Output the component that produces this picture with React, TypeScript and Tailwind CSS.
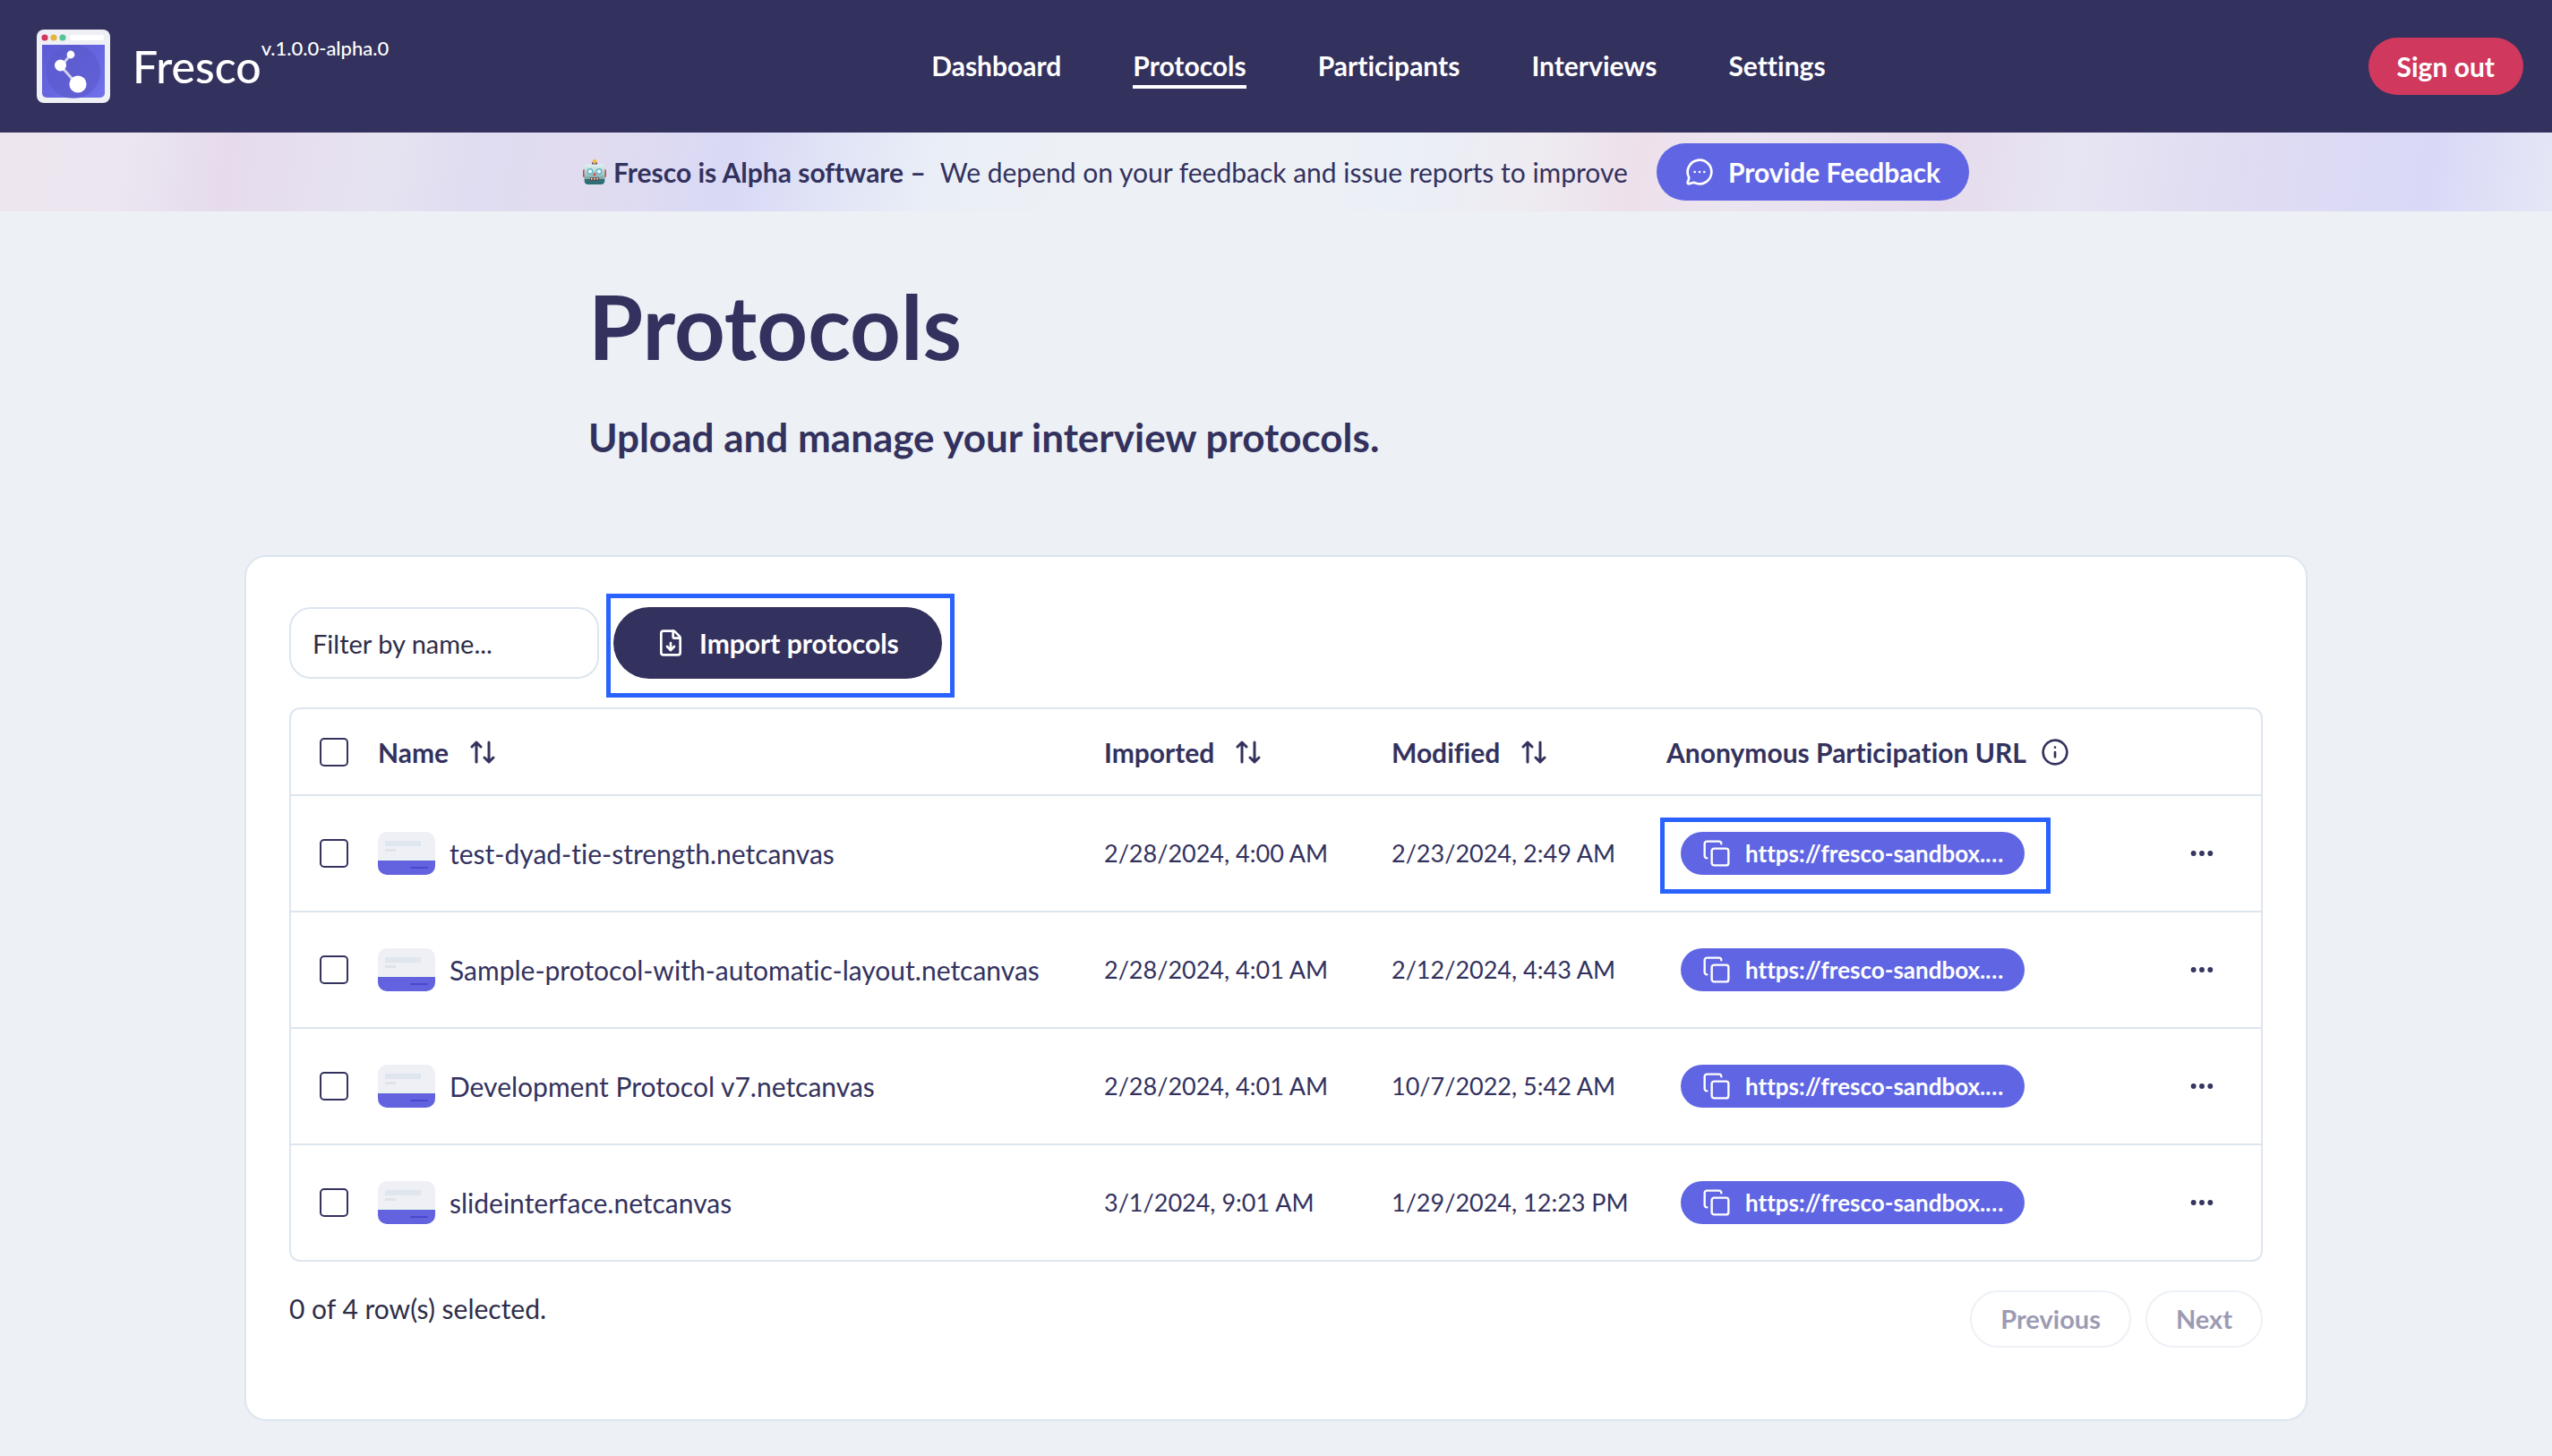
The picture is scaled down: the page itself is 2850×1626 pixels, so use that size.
import { useState } from "react";
import { Copy, Ellipsis, FileDown, Info, MessageCircleMore } from "lucide-react";

const navItems = ["Dashboard", "Protocols", "Participants", "Interviews", "Settings"];

const protocols = [
  { name: "test-dyad-tie-strength.netcanvas", imported: "2/28/2024, 4:00 AM", modified: "2/23/2024, 2:49 AM" },
  { name: "Sample-protocol-with-automatic-layout.netcanvas", imported: "2/28/2024, 4:01 AM", modified: "2/12/2024, 4:43 AM" },
  { name: "Development Protocol v7.netcanvas", imported: "2/28/2024, 4:01 AM", modified: "10/7/2022, 5:42 AM" },
  { name: "slideinterface.netcanvas", imported: "3/1/2024, 9:01 AM", modified: "1/29/2024, 12:23 PM" },
];

function Logo() {
  return (
    <svg viewBox="0 0 84 84" className="size-[84px] shrink-0" aria-hidden="true">
      <defs>
        <linearGradient id="screen" x1="0" y1="0" x2="1" y2="1">
          <stop offset="0" stopColor="#5b5bd6" />
          <stop offset="1" stopColor="#6f70ea" />
        </linearGradient>
      </defs>
      <rect x="1" y="1" width="82" height="82" rx="8" fill="#eef0f6" />
      <circle cx="10" cy="10" r="3.6" fill="#d0385d" />
      <circle cx="20" cy="10" r="3.6" fill="#e5b53f" />
      <circle cx="30" cy="10" r="3.6" fill="#55c595" />
      <rect x="38" y="7" width="38" height="6" rx="3" fill="#fff" />
      <path d="M7 18h70v54a5 5 0 0 1-5 5H12a5 5 0 0 1-5-5z" fill="url(#screen)" />
      <circle cx="42" cy="48" r="30" fill="#5a58c8" opacity=".6" />
      <path d="M39 29 28 42 46 62" fill="none" stroke="#cfcfe8" strokeWidth="3" />
      <circle cx="39" cy="29" r="4.4" fill="#fff" />
      <circle cx="27.5" cy="41" r="6.5" fill="#fff" />
      <circle cx="47" cy="62" r="9.6" fill="#fff" />
    </svg>
  );
}

function Robot() {
  return (
    <svg viewBox="0 0 26 28" className="h-7 w-[26px] shrink-0" role="img" aria-label="Robot">
      <defs>
        <linearGradient id="robot" x1="0" y1="0" x2="0" y2="1">
          <stop offset="0" stopColor="#e3f3f2" />
          <stop offset="0.5" stopColor="#a3c9ca" />
          <stop offset="1" stopColor="#3f7f86" />
        </linearGradient>
      </defs>
      <rect x="10" y="3" width="6" height="4" rx="1" fill="#5a4a78" />
      <circle cx="13" cy="2.4" r="2.4" fill="#f5b942" />
      <rect x="0" y="11" width="4" height="9" rx="1.5" fill="#c8463c" />
      <rect x="22" y="11" width="4" height="9" rx="1.5" fill="#c8463c" />
      <rect x="1.5" y="5.5" width="23" height="22" rx="4" fill="url(#robot)" />
      <path d="M2 22h22v2a4 4 0 0 1-4 4H6a4 4 0 0 1-4-4z" fill="#2f6e76" />
      <circle cx="8" cy="13.5" r="3.4" fill="#5fb4c6" />
      <circle cx="18" cy="13.5" r="3.4" fill="#5fb4c6" />
      <circle cx="8" cy="13.5" r="2" fill="#fff" />
      <circle cx="18" cy="13.5" r="2" fill="#fff" />
      <path d="m13 14 2 4h-4z" fill="#d64b3f" />
      <rect x="8" y="20" width="10" height="3.4" rx="1" fill="#6b3b3b" />
      <path d="M9 21.7h1.5m1.6 0h1.5m1.6 0h1.5" stroke="#fff" strokeWidth="1.8" />
    </svg>
  );
}

function Thumbnail() {
  return (
    <svg viewBox="0 0 64 48" className="h-12 w-16 shrink-0 rounded-[10px]" aria-hidden="true">
      <rect width="64" height="48" fill="#eef0f5" />
      <rect x="8" y="10" width="40" height="6" fill="#dfe6ee" />
      <rect x="8" y="19" width="12" height="3" fill="#dfe4ea" />
      <rect y="30" width="64" height="2" fill="#eaf5f2" />
      <rect y="32" width="64" height="16" fill="#6363e0" />
      <rect x="36" y="39" width="20" height="2" rx="1" fill="#4a47d0" />
    </svg>
  );
}

function SortIcon() {
  return (
    <svg viewBox="0 0 28 28" className="size-7" fill="none" stroke="currentColor" strokeWidth="3" strokeLinecap="round" strokeLinejoin="round" aria-hidden="true">
      <path d="M7 25V3M2 8l5-5 5 5M21 3v22M16 20l5 5 5-5" />
    </svg>
  );
}

function Checkbox({ label, checked, onChange }: { label: string; checked: boolean; onChange: () => void }) {
  return (
    <input
      type="checkbox"
      aria-label={label}
      checked={checked}
      onChange={onChange}
      className="block size-8 appearance-none rounded-[5px] border-2 border-[#33325e] checked:bg-[#33325e]"
    />
  );
}

function SortHeader({ label }: { label: string }) {
  return (
    <th scope="col" className="px-4 text-left font-bold">
      <button type="button" className="flex items-center gap-6">
        {label}
        <SortIcon />
      </button>
    </th>
  );
}

export default function App() {
  const [filter, setFilter] = useState("");
  const [selected, setSelected] = useState<string[]>([]);
  const rows = protocols.filter((p) => p.name.toLowerCase().includes(filter.toLowerCase()));
  const toggle = (name: string) =>
    setSelected((s) => (s.includes(name) ? s.filter((n) => n !== name) : [...s, name]));
  const allSelected = selected.length === protocols.length;

  return (
    <div className="min-h-screen bg-[#edf0f5] pb-9 font-[Lato,sans-serif] text-[30px] leading-10 text-[#33325e] [font-variant-ligatures:none]">
      <header className="flex items-center justify-between bg-[#33315d] py-8 pr-8 pl-10 text-white">
        <a href="#home" className="flex items-center gap-6">
          <Logo />
          <span className="flex items-start">
            <span className="text-[50px] leading-[84px] font-medium">Fresco</span>
            <span className="text-[22px] leading-[44px] font-medium">v.1.0.0-alpha.0</span>
          </span>
        </a>
        <nav className="flex gap-20 font-bold">
          {navItems.map((item) => (
            <a
              key={item}
              href={"#" + item.toLowerCase()}
              aria-current={item === "Protocols" ? "page" : undefined}
              className="border-y-4 border-transparent pb-0.5 aria-[current=page]:border-b-white"
            >
              {item}
            </a>
          ))}
        </nav>
        <button type="button" className="h-16 rounded-full bg-[#d0385d] px-8 font-bold">
          Sign out
        </button>
      </header>

      <div className="flex h-[88px] items-center justify-center bg-[linear-gradient(100deg,#eee6ef_0%,#ebe6f1_5%,#e6dbec_9%,#e6e3f1_15%,#e0dcf1_19%,#e1dcef_23%,#d9d9f6_29%,#e2e5f6_33%,#eaeff7_37%,#edf0f5_42%,#edf0f5_52%,#ebeff7_55%,#eeebf1_60%,#ede0eb_64%,#ebe5f0_68%,#e6dbec_76%,#e7e5f3_81%,#e0dcf2_87%,#d9d9f7_95%,#e5e7f6_100%)]">
        <Robot />
        <p className="ml-2">
          <strong className="font-bold">Fresco is Alpha software –</strong>
          <span className="ml-4">We depend on your feedback and issue reports to improve</span>
        </p>
        <button type="button" className="ml-8 flex h-16 items-center gap-4 rounded-full bg-[#6066e3] px-8 font-bold text-white">
          <MessageCircleMore className="size-8" aria-hidden="true" />
          Provide Feedback
        </button>
      </div>

      <main>
        <div className="mx-auto max-w-[1536px] pt-[68px] pb-[100px]">
          <h1 className="text-[99px] leading-[120px] font-bold">Protocols</h1>
          <p className="mt-8 text-[44px] leading-[64px] font-bold">Upload and manage your interview protocols.</p>
        </div>

        <section className="mx-auto max-w-[2304px] rounded-3xl border-2 border-[#dde5ef] bg-white px-12 pt-14 pb-20">
          <div className="flex items-center gap-4">
            <input
              type="text"
              aria-label="Filter by name"
              placeholder="Filter by name..."
              value={filter}
              onChange={(e) => setFilter(e.target.value)}
              className="h-20 w-[346px] rounded-3xl border-2 border-[#dde5ef] bg-white px-6 text-[29px] placeholder:text-[#2e2d47]"
            />
            <div className="relative">
              <button type="button" className="flex h-20 items-center gap-4 rounded-full bg-[#33315d] px-12 font-bold text-white">
                <FileDown className="size-8" aria-hidden="true" />
                Import protocols
              </button>
              <div className="pointer-events-none absolute -top-[15px] -right-[14px] -bottom-[21px] -left-2 border-[5px] border-[#2962ff]" />
            </div>
          </div>

          <div className="mt-8 overflow-hidden rounded-xl border-2 border-[#dde5ef]">
            <table className="w-full table-fixed">
              <colgroup>
                <col className="w-[81px]" />
                <col />
                <col className="w-[321px]" />
                <col className="w-[307px]" />
                <col className="w-[548px]" />
                <col className="w-[132px]" />
              </colgroup>
              <thead>
                <tr className="h-24 border-b-2 border-[#dde5ef]">
                  <th scope="col" className="pl-8">
                    <Checkbox
                      label="Select all"
                      checked={allSelected}
                      onChange={() => setSelected(allSelected ? [] : protocols.map((p) => p.name))}
                    />
                  </th>
                  <SortHeader label="Name" />
                  <SortHeader label="Imported" />
                  <SortHeader label="Modified" />
                  <th scope="col" className="px-4 text-left font-bold">
                    <span className="flex items-center gap-4">
                      Anonymous Participation URL
                      <Info className="size-8" aria-hidden="true" />
                    </span>
                  </th>
                  <th scope="col" aria-label="Actions" />
                </tr>
              </thead>
              <tbody>
                {rows.map((p, i) => (
                  <tr key={p.name} className="h-[130px] border-b-2 border-[#dde5ef] last:h-[129px] last:border-b-0">
                    <td className="pl-8">
                      <Checkbox label={"Select " + p.name} checked={selected.includes(p.name)} onChange={() => toggle(p.name)} />
                    </td>
                    <td className="px-4">
                      <div className="flex items-center gap-4">
                        <Thumbnail />
                        {p.name}
                      </div>
                    </td>
                    <td className="px-4 text-[27px] whitespace-nowrap">{p.imported}</td>
                    <td className="px-4 text-[27px] whitespace-nowrap">{p.modified}</td>
                    <td className="px-8">
                      <div className="relative w-[384px]">
                        <button type="button" className="flex h-12 w-full items-center gap-4 rounded-full bg-[#6066e3] pr-4 pl-6 text-[26px] font-bold whitespace-nowrap text-white">
                          <Copy className="size-8 shrink-0" strokeWidth={1.8} aria-hidden="true" />
                          https://fresco-sandbox.…
                        </button>
                        {i === 0 && (
                          <div className="pointer-events-none absolute -top-4 -right-[29px] -bottom-[21px] -left-[23px] border-[5px] border-[#2962ff]" />
                        )}
                      </div>
                    </td>
                    <td>
                      <button type="button" aria-label={"Actions for " + p.name} className="mx-auto flex size-16 items-center justify-center">
                        <Ellipsis className="size-8" strokeWidth={2.4} aria-hidden="true" />
                      </button>
                    </td>
                  </tr>
                ))}
              </tbody>
            </table>
          </div>

          <div className="mt-8 flex items-start justify-between">
            <p className="text-[#2e2d47]">{selected.length} of 4 row(s) selected.</p>
            <div className="flex gap-4 text-[29px] text-[#9c9bb3]">
              <button type="button" disabled className="h-16 rounded-full border-2 border-[#edf1f6] px-8 font-bold">
                Previous
              </button>
              <button type="button" disabled className="h-16 rounded-full border-2 border-[#edf1f6] px-8 font-bold">
                Next
              </button>
            </div>
          </div>
        </section>
      </main>
    </div>
  );
}
